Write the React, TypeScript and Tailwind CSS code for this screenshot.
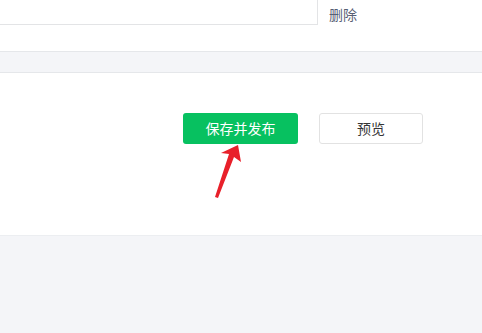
import React from "react";

export default function App() {
  return (
    <div
      className="relative w-[482px] h-[333px] overflow-hidden bg-white"
      style={{ fontFamily: '"Noto Sans CJK SC", "Noto Sans", sans-serif' }}
    >
      <div className="flex h-[51px] bg-white">
        <div className="w-[318px] h-[25px] border-r border-b border-[#e3e4e6] bg-white" />
        <div className="ml-[11px] mt-[3px] text-[14px] leading-[22px] text-[#576075]">删除</div>
      </div>
      <div className="h-[22px] bg-[#f4f5f8] border-t border-b border-[#e5e7ea]" />
      <div className="h-[162px] bg-white pt-[40px] pl-[183px] flex gap-[21px] items-start">
        <button className="w-[115px] h-[31px] rounded-[3px] bg-[#07c160] text-white text-[14px] leading-[31px] text-center">
          保存并发布
        </button>
        <button className="w-[104px] h-[31px] rounded-[3px] border border-[#e2e2e2] bg-white text-[#353535] text-[14px] text-center">
          预览
        </button>
      </div>
      <div className="h-[98px] bg-[#f4f5f8] border-t border-[#eceef1]" />
      <svg
        className="absolute left-0 top-0"
        width="482"
        height="333"
        viewBox="0 0 482 333"
      >
        <path
          d="M238 145 L241 162 L234 157 L218 198 L215 197 L229 154 L221 153 Z"
          fill="#e8202a"
        />
      </svg>
    </div>
  );
}
